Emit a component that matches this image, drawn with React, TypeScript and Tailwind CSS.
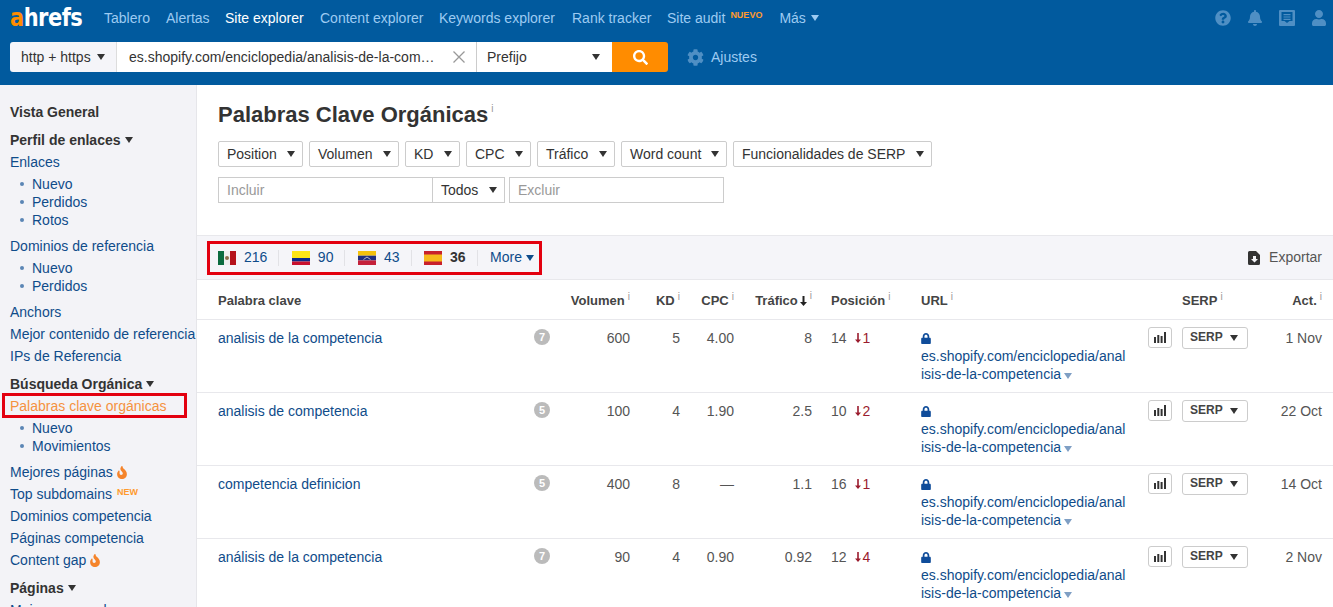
import { FaBell, FaCog, FaFire, FaLock, FaQuestionCircle, FaSearch, FaUser } from "react-icons/fa";

const LINK = "text-[#0f4c8a]";

function Caret({ className = "" }: { className?: string }) {
  return <span className={`inline-block h-0 w-0 border-x-[4.5px] border-t-[6px] border-x-transparent border-t-current ${className}`} />;
}

function Info() {
  return <sup className="ml-[3px] text-[10px] font-normal leading-none text-[#999]">i</sup>;
}

function Flag({ code }: { code: string }) {
  if (code === "mx") {
    return (
      <svg width="18" height="14" viewBox="0 0 18 14" className="shrink-0">
        <rect width="6" height="14" fill="#0b6b3f" />
        <rect x="6" width="6" height="14" fill="#eee" />
        <rect x="12" width="6" height="14" fill="#b5121b" />
        <circle cx="9" cy="7" r="2" fill="#8a6d4b" />
      </svg>
    );
  }
  if (code === "co") {
    return (
      <svg width="18" height="14" viewBox="0 0 18 14" className="shrink-0">
        <rect width="18" height="7" fill="#fce516" />
        <rect y="7" width="18" height="3.5" fill="#0b2a8a" />
        <rect y="10.5" width="18" height="3.5" fill="#c8102e" />
      </svg>
    );
  }
  if (code === "ve") {
    return (
      <svg width="18" height="14" viewBox="0 0 18 14" className="shrink-0">
        <rect width="18" height="4.7" fill="#f4c20d" />
        <rect y="4.7" width="18" height="4.7" fill="#1f2f80" />
        <rect y="9.4" width="18" height="4.6" fill="#c4213a" />
        <path d="M5.5 8.5 9 6l3.5 2.5" fill="none" stroke="#ddd" strokeWidth="0.8" />
      </svg>
    );
  }
  return (
    <svg width="18" height="14" viewBox="0 0 18 14" className="shrink-0">
      <rect width="18" height="14" fill="#c8202c" />
      <rect y="3.5" width="18" height="7" fill="#f6b91c" />
    </svg>
  );
}

function TopNav() {
  const items = [
    { label: "Tablero", cls: "w-[62px]" },
    { label: "Alertas", cls: "w-[59px]" },
    { label: "Site explorer", cls: "w-[95px] text-white" },
    { label: "Content explorer", cls: "w-[119px]" },
    { label: "Keywords explorer", cls: "w-[133px]" },
    { label: "Rank tracker", cls: "w-[95px]" },
  ];
  return (
    <div className="flex h-[36px] items-center pl-[10px] pr-[6px] text-[14px] text-[#9dcbf2]">
      <div className="w-[94px] origin-center scale-y-[1.2] font-['DejaVu_Sans',sans-serif] text-[21px] font-bold leading-none tracking-[-0.5px] text-white">
        <span className="text-[#ff8c00]">a</span>hrefs
      </div>
      {items.map((item) => (
        <span key={item.label} className={`shrink-0 ${item.cls}`}>{item.label}</span>
      ))}
      <span className="shrink-0">Site audit</span>
      <span className="mb-[6px] ml-[5px] w-[49px] shrink-0 text-[9px] font-bold leading-none text-[#ff9a2e]">NUEVO</span>
      <span className="shrink-0">Más</span>
      <Caret className="ml-[5px] text-[#9dcbf2]" />
      <div className="ml-auto flex items-center gap-[16px] text-[16px] text-[#4f8fc4]">
        <FaQuestionCircle className="h-[16px] w-[16px]" />
        <FaBell className="h-[16px] w-[16px]" />
        <svg width="16" height="16" viewBox="0 0 16 16" fill="currentColor">
          <path d="M1 0h14a1 1 0 0 1 1 1v14a1 1 0 0 1-1 1H1a1 1 0 0 1-1-1V1a1 1 0 0 1 1-1Zm1.5 2v9h3l2.5 2 2.5-2h3V2h-11Zm2 2h7v1.2h-7V4Zm0 2.4h7v1.2h-7V6.4Zm0 2.4h7V10h-7V8.8Z" fillRule="evenodd" />
        </svg>
        <FaUser className="h-[16px] w-[16px]" />
      </div>
    </div>
  );
}

function SearchBar() {
  return (
    <div className="flex h-[30px] items-center pl-[10px] text-[14px] text-[#333]">
      <div className="flex h-full w-[107px] items-center rounded-l-[3px] border-r border-[#ddd] bg-[#f5f5f9] pl-[11px]">
        http + https
        <Caret className="ml-[6px] text-[#333]" />
      </div>
      <div className="flex h-full w-[360px] items-center border-r border-[#ccc] bg-white pl-[12px] pr-[10px]">
        <span className="flex-1 truncate">es.shopify.com/enciclopedia/analisis-de-la-com…</span>
        <svg width="14" height="14" viewBox="0 0 14 14" className="ml-[14px] shrink-0" stroke="#999" strokeWidth="1.3">
          <path d="M1.5 1.5l11 11M12.5 1.5l-11 11" />
        </svg>
      </div>
      <div className="flex h-full w-[135px] items-center justify-between bg-white pl-[10px] pr-[12px]">
        Prefijo
        <Caret className="text-[#333]" />
      </div>
      <div className="flex h-full w-[56px] items-center justify-center rounded-r-[3px] bg-[#ff8c00] text-white">
        <FaSearch className="h-[15px] w-[15px]" />
      </div>
      <FaCog className="ml-[19px] h-[17px] w-[17px] text-[#4f8fc4]" />
      <span className="ml-[7px] text-[#9dcbf2]">Ajustes</span>
    </div>
  );
}

function SideLink({ children, className = "" }: { children: React.ReactNode; className?: string }) {
  return <div className={`flex h-[22px] items-center whitespace-nowrap pl-[10px] ${LINK} ${className}`}>{children}</div>;
}

function SubList({ items }: { items: string[] }) {
  return (
    <ul className="mb-[6px] mt-[2px]">
      {items.map((t) => (
        <li key={t} className={`flex h-[18px] items-center pl-[20px] ${LINK}`}>
          <span className="mr-[8px] h-[4px] w-[4px] rounded-full bg-[#5b86b5]" />
          {t}
        </li>
      ))}
    </ul>
  );
}

function SideHead({ children, caret = true, className = "" }: { children: React.ReactNode; caret?: boolean; className?: string }) {
  return (
    <div className={`flex h-[22px] items-center pl-[10px] font-bold text-[#333] ${className}`}>
      {children}
      {caret ? <Caret className="ml-[4px] text-[#333]" /> : null}
    </div>
  );
}

function Sidebar() {
  return (
    <aside className="w-[197px] shrink-0 overflow-hidden border-r border-[#e6e6ea] bg-[#f3f3f7] pt-[16px] text-[14px]">
      <SideHead caret={false} className="mb-[6px]">Vista General</SideHead>
      <SideHead>Perfil de enlaces</SideHead>
      <SideLink>Enlaces</SideLink>
      <SubList items={["Nuevo", "Perdidos", "Rotos"]} />
      <SideLink>Dominios de referencia</SideLink>
      <SubList items={["Nuevo", "Perdidos"]} />
      <SideLink>Anchors</SideLink>
      <SideLink>Mejor contenido de referencia</SideLink>
      <SideLink>IPs de Referencia</SideLink>
      <SideHead className="mt-[6px]">Búsqueda Orgánica</SideHead>
      <div className="relative">
        <SideLink className="!text-[#f5923e]">Palabras clave orgánicas</SideLink>
        <div className="absolute left-[2px] top-[-2px] h-[25px] w-[185px] border-[3px] border-[#e3000f]" />
      </div>
      <SubList items={["Nuevo", "Movimientos"]} />
      <SideLink>Mejores páginas<FaFire className="ml-[3px] h-[13px] w-[12px] text-[#f5842b]" /></SideLink>
      <SideLink>
        Top subdomains
        <span className="mb-[4px] ml-[5px] text-[9px] font-bold leading-none text-[#ff9a2e]">NEW</span>
      </SideLink>
      <SideLink>Dominios competencia</SideLink>
      <SideLink>Páginas competencia</SideLink>
      <SideLink>Content gap<FaFire className="ml-[3px] h-[13px] w-[12px] text-[#f5842b]" /></SideLink>
      <SideHead className="mt-[6px]">Páginas</SideHead>
      <SideLink>Mejores por enlaces</SideLink>
    </aside>
  );
}

function FilterButton({ label, className }: { label: string; className: string }) {
  return (
    <button className={`flex h-[26px] items-center justify-between rounded-[2px] border border-[#ccc] bg-white pl-[8px] pr-[7px] text-[14px] text-[#333] ${className}`}>
      {label}
      <Caret className="text-[#333]" />
    </button>
  );
}

function Filters() {
  return (
    <div className="h-[150px] pl-[21px] pt-[15px]">
      <h1 className="flex h-[30px] items-start text-[22px] font-bold leading-[30px] text-[#333]">
        Palabras Clave Orgánicas
        <sup className="ml-[3px] mt-[9px] text-[10px] font-normal leading-none text-[#999]">i</sup>
      </h1>
      <div className="mt-[11px] flex gap-[6px]">
        <FilterButton label="Position" className="w-[85px]" />
        <FilterButton label="Volumen" className="w-[90px]" />
        <FilterButton label="KD" className="w-[55px]" />
        <FilterButton label="CPC" className="w-[65px]" />
        <FilterButton label="Tráfico" className="w-[78px]" />
        <FilterButton label="Word count" className="w-[106px]" />
        <FilterButton label="Funcionalidades de SERP" className="w-[199px]" />
      </div>
      <div className="mt-[10px] flex text-[14px] text-[#999]">
        <div className="flex h-[26px] w-[215px] items-center border border-[#ccc] pl-[8px]">Incluir</div>
        <div className="-ml-px flex h-[26px] w-[73px] items-center justify-between border border-[#ccc] pl-[8px] pr-[7px] text-[#333]">
          Todos
          <Caret />
        </div>
        <div className="ml-[4px] flex h-[26px] w-[215px] items-center border border-[#ccc] pl-[8px]">Excluir</div>
      </div>
    </div>
  );
}

function CountryBar() {
  const countries = [
    { code: "mx", n: "216" },
    { code: "co", n: "90" },
    { code: "ve", n: "43" },
    { code: "es", n: "36", active: true },
  ];
  return (
    <div className="flex h-[45px] items-center justify-between border-y border-[#e8e8ec] bg-[#f5f5f9] pl-[10px] pr-[11px] text-[14px]">
      <div className="flex h-[34px] w-[335px] items-center border-[3px] border-[#e3000f] pl-[8px]">
        {countries.map((c) => (
          <div key={c.code} className="flex items-center">
            <Flag code={c.code} />
            <span className={`ml-[8px] ${c.active ? "font-bold text-[#333]" : LINK}`}>{c.n}</span>
            <span className="ml-[11px] mr-[12.5px] h-[16px] w-px bg-[#e2e2e6]" />
          </div>
        ))}
        <span className={`flex items-center ${LINK}`}>
          More
          <Caret className="ml-[4px]" />
        </span>
      </div>
      <div className="flex items-center text-[#555]">
        <svg width="13" height="14" viewBox="0 0 13 14" fill="#333" className="mr-[8px]">
          <path d="M1.5 0H8l4 4v8.5a1.5 1.5 0 0 1-1.5 1.5h-9A1.5 1.5 0 0 1 0 12.5v-11A1.500 1.500 0 0 1 1.500 0Zm3.500 5v3H3l3.500 3.500L10 8H8V5H5Z" fillRule="evenodd" />
        </svg>
        Exportar
      </div>
    </div>
  );
}

const GRID = "grid grid-cols-[312px_30px_70px_50px_54px_78px_19px_90px_227px_34px_76px_64px] pl-[21px] pr-[11px]";

const rows = [
  { kw: "analisis de la competencia", d: 7, vol: "600", kd: "5", cpc: "4.00", tr: "8", pos: "14", delta: "1", act: "1 Nov" },
  { kw: "analisis de competencia", d: 5, vol: "100", kd: "4", cpc: "1.90", tr: "2.5", pos: "10", delta: "2", act: "22 Oct" },
  { kw: "competencia definicion", d: 5, vol: "400", kd: "8", cpc: "—", tr: "1.1", pos: "16", delta: "1", act: "14 Oct" },
  { kw: "análisis de la competencia", d: 7, vol: "90", kd: "4", cpc: "0.90", tr: "0.92", pos: "12", delta: "4", act: "2 Nov" },
];

function KeywordTable() {
  return (
    <div className="text-[14px] text-[#555]">
      <div className={`${GRID} h-[40px] items-center border-b border-[#e8e8ec] pt-[3px] text-[13px] font-bold text-[#444]`}>
        <div>Palabra clave</div>
        <div />
        <div className="text-right">Volumen<Info /></div>
        <div className="text-right">KD<Info /></div>
        <div className="text-right">CPC<Info /></div>
        <div className="flex items-center justify-end">
          Tráfico
          <svg width="7" height="10" viewBox="0 0 7 10" className="ml-[2px]" fill="#222"><path d="M2.500 0h2v6H7L3.500 10 0 6h2.500Z" /></svg>
          <Info />
        </div>
        <div />
        <div>Posición<Info /></div>
        <div>URL<Info /></div>
        <div />
        <div>SERP<Info /></div>
        <div className="text-right">Act.<Info /></div>
      </div>
      {rows.map((r) => (
        <div key={r.kw} className={`${GRID} h-[73px] border-b border-[#e8e8ec] pt-[9px] leading-[18px]`}>
          <div className={LINK}>{r.kw}</div>
          <div className="pl-[4px]">
            <span className="flex h-[16px] w-[16px] items-center justify-center rounded-full bg-[#bbb] text-[11px] font-bold leading-none text-white">{r.d}</span>
          </div>
          <div className="text-right">{r.vol}</div>
          <div className="text-right">{r.kd}</div>
          <div className="text-right">{r.cpc}</div>
          <div className="text-right">{r.tr}</div>
          <div />
          <div className="flex h-[18px] items-center">
            {r.pos}
            <span className="ml-[8px] flex items-center text-[#9b1c2e]">
              <svg width="6" height="10" viewBox="0 0 6 10" className="mr-[2px]" fill="#9b1c2e"><path d="M2.200 0h1.600v6.500H6L3 10 0 6.500h2.200Z" /></svg>
              {r.delta}
            </span>
          </div>
          <div className={`${LINK} break-all`}>
            <FaLock className="h-[11px] w-[10px] translate-y-[4px] text-[#0f4c9a]" />
            <div className="mt-[7px]">
              es.shopify.com/enciclopedia/anal
              <br />
              isis-de-la-competencia
              <Caret className="ml-[3px] text-[#7f9fc4]" />
            </div>
          </div>
          <div>
            <span className="-mt-[2px] flex h-[21px] w-[24px] items-center justify-center rounded-[3px] border border-[#ccc]">
              <svg width="12" height="11" viewBox="0 0 12 11" fill="#333">
                <rect x="0" y="5" width="2" height="6" /><rect x="3.300" y="3" width="2" height="8" /><rect x="6.600" y="4" width="2" height="7" /><rect x="10" y="0" width="2" height="11" />
              </svg>
            </span>
          </div>
          <div>
            <span className="-mt-[2px] flex h-[22px] w-[66px] items-center justify-between rounded-[3px] border border-[#ccc] pb-[2px] pl-[7px] pr-[9px] text-[12px] font-bold text-[#444]">
              SERP
              <Caret className="mt-[2px] text-[#333]" />
            </span>
          </div>
          <div className="text-right">{r.act}</div>
        </div>
      ))}
    </div>
  );
}

export default function App() {
  return (
    <div className="flex h-[607px] w-[1333px] flex-col overflow-hidden bg-white font-['Liberation_Sans',Arial,sans-serif]">
      <header className="h-[85px] shrink-0 bg-[#015a9e]">
        <TopNav />
        <div className="mt-[6px]">
          <SearchBar />
        </div>
      </header>
      <div className="flex min-h-0 flex-1">
        <Sidebar />
        <main className="min-w-0 flex-1">
          <Filters />
          <CountryBar />
          <KeywordTable />
        </main>
      </div>
    </div>
  );
}
